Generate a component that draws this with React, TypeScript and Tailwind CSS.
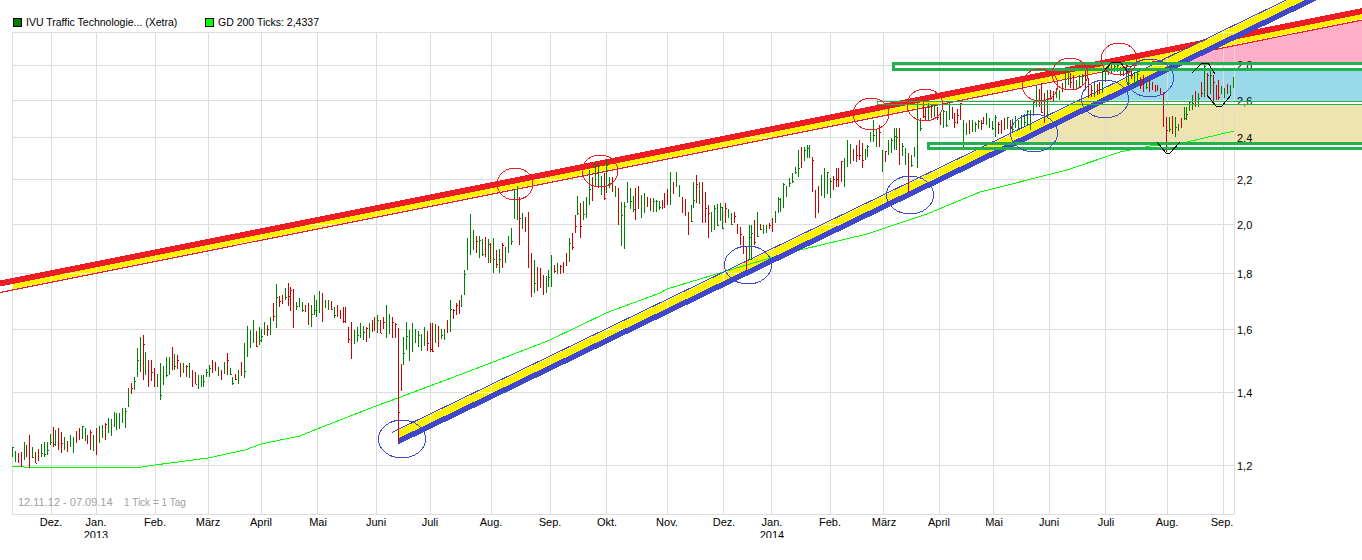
const FONT = "font-['Liberation_Sans',Arial,sans-serif]";

const gridX = [12, 51, 96, 155, 208, 261, 317, 376, 430, 491, 550, 606, 667, 723, 771, 830, 883, 939, 993, 1049, 1105, 1167, 1223, 1234];
const gridY = [32, 65, 100, 137, 179, 224, 273, 329, 392, 465, 514];

const yLabels: [string, number][] = [
  ["2,8", 69], ["2,6", 105], ["2,4", 142], ["2,2", 184], ["2,0", 229],
  ["1,8", 278], ["1,6", 334], ["1,4", 397], ["1,2", 470],
];

const xLabels: [string, number][] = [
  ["Dez.", 51], ["Jan.", 96], ["Feb.", 155], ["März", 208], ["April", 261], ["Mai", 318],
  ["Juni", 376], ["Juli", 430], ["Aug.", 491], ["Sep.", 550], ["Okt.", 607], ["Nov.", 667],
  ["Dez.", 724], ["Jan.", 772], ["Feb.", 830], ["März", 884], ["April", 939], ["Mai", 994],
  ["Juni", 1049], ["Juli", 1106], ["Aug.", 1167], ["Sep.", 1222],
];

// [x, high, low, red?] read off the chart
const keys: number[][] = [
  [12,447,457],[20,452,467,1],[29,435,468,1],[35,452,463,1],[45,442,457],[53,427,447,1],[62,432,453,1],[72,437,453],[78,428,440,1],[90,430,450,1],
  [96,428,455,1],[105,423,440,1],[116,413,430],[124,408,428],[129,388,407],[133,377,390],[137,348,377],[142,335,380,1],[148,360,387,1],[153,368,387,1],
  [160,363,400],[168,357,375],[172,347,370,1],[180,363,377,1],[190,363,378],[193,370,387,1],[202,375,387],[212,360,373,1],[213,350,370,1],[220,370,380,1],
  [228,353,375,1],[232,377,385],[238,370,383],[243,343,378],[246,326,357],[252,320,343],[259,327,345],[265,322,335],[270,317,335],[276,284,328],
  [284,288,300],[286,284,305,1],[293,289,328,1],[300,298,307],[309,303,325,1],[313,295,315],[321,293,322,1],[328,300,310],[336,305,317,1],[344,307,323,1],
  [350,322,359,1],[358,327,342],[366,327,342,1],[376,315,333],[381,320,333,1],[385,305,338],[391,317,338,1],[394,323,338,1],[399,328,442,1],[403,337,365],
  [407,322,350],[413,323,352],[420,334,351],[431,323,352,1],[437,326,347,1],[445,329,340],[451,300,332],[455,303,315,1],[461,295,307],[465,270,295],
  [468,238,270],[471,214,255],[475,236,253,1],[479,236,258],[486,237,257,1],[494,238,273],[502,243,268,1],[509,236,253],[515,189,218],[519,197,245,1],
  [525,217,232,1],[528,212,268,1],[531,253,297,1],[535,260,293],[539,268,288,1],[543,275,295,1],[548,270,287],[551,255,287],[558,263,273],[564,262,273,1],
  [569,238,262],[572,233,250,1],[577,196,215],[580,203,238,1],[585,197,218],[590,170,205],[596,162,187],[603,173,200,1],[606,160,193],[612,177,192,1],
  [619,188,225,1],[625,202,249],[628,182,203],[635,188,220,1],[643,193,213],[650,198,210,1],[655,200,212],[664,193,208,1],[671,172,205],[677,172,187],
  [683,197,213,1],[688,212,235,1],[695,175,203,1],[701,182,223,1],[708,205,238,1],[715,205,230],[725,203,223,1],[733,212,223,1],[741,227,245,1],[747,247,270,1],
  [750,225,260],[758,212,237],[765,225,233],[771,218,232,1],[778,197,213],[784,183,208],[790,178,187],[797,150,177],[802,147,168,1],[808,145,158],
  [813,157,192,1],[816,190,218,1],[823,168,198],[830,178,198],[837,168,187,1],[843,158,187],[848,140,167],[855,145,162,1],[861,143,168,1],[868,145,157],
  [872,120,142],[879,125,147,1],[883,150,172],[888,140,155],[895,128,150],[900,128,165,1],[904,148,165],[907,153,192,1],[913,147,157],[918,103,168],
  [922,102,118,1],[929,103,120],[937,107,120,1],[943,110,128],[948,102,120],[955,113,128,1],[962,103,123,1],[964,120,147],[971,120,132],[980,120,130,1],
  [985,113,125],[995,115,137],[1005,118,130,1],[1020,115,128],[1030,110,130],[1037,85,107],[1041,83,113,1],[1046,90,117],[1049,90,100,1],[1058,90,100],
  [1066,72,90],[1072,75,90,1],[1079,75,88],[1085,70,90,1],[1087,78,98,1],[1095,83,97],[1103,70,93],[1108,63,75],[1115,63,72],[1125,65,78,1],
  [1135,72,87],[1142,75,92,1],[1150,80,92,1],[1155,85,92,1],[1162,88,93,1],[1164,92,127,1],[1166,117,152,1],[1170,117,132],[1176,117,137],[1181,118,128,1],
  [1185,107,120],[1192,95,110],[1198,93,107],[1203,63,97],[1207,73,97,1],[1213,75,102,1],[1218,80,100,1],[1224,88,97],[1229,85,95],[1234,77,88],
];

// small repeatable noise, so the bars are the same on every load
let seed = 17;
const rnd = () => {
  seed = (seed * 16807) % 2147483647;
  return seed / 2147483647;
};

const buildBars = () => {
  const out: { d: string; red: boolean }[] = [];
  let k = 0;
  for (let x = 12; x <= 1234; x += 2.9) {
    while (k < keys.length - 2 && keys[k + 1][0] < x) k++;
    const a = keys[k];
    const b = keys[k + 1];
    const near = Math.abs(a[0] - x) < Math.abs(b[0] - x) ? a : b;
    let hi: number, lo: number, red: boolean;
    if (Math.abs(near[0] - x) <= 1.5) {
      hi = near[1];
      lo = near[2];
      red = !!near[3];
    } else {
      const t = (x - a[0]) / (b[0] - a[0]);
      const mid = ((a[1] + a[2]) * (1 - t) + (b[1] + b[2]) * t) / 2;
      const span = Math.max(6, Math.min(a[2] - a[1], b[2] - b[1]) * (0.7 + rnd() * 0.5));
      const shift = (rnd() - 0.5) * span * 0.6;
      hi = mid - span / 2 + shift;
      lo = mid + span / 2 + shift;
      red = rnd() > 0.55;
    }
    const px = Math.round(x) + 0.5;
    const top = Math.round(hi);
    const bottom = Math.round(lo);
    // one tick per bar, the reference mostly shows one side only
    const tickY = Math.round(hi + (lo - hi) * rnd()) + 0.5;
    const tick = rnd() > 0.5 ? `M${px - 1} ${tickY}H${px}` : `M${px} ${tickY}H${px + 1}`;
    out.push({ d: `M${px} ${top}V${bottom}${tick}`, red });
  }
  return out;
};

const bars = buildBars();
const redBars = bars.filter((b) => b.red).map((b) => b.d).join("");
const greenBars = bars.filter((b) => !b.red).map((b) => b.d).join("");

const avg =
  "12,466 24,467 63,467 135,468 155,465 208,458 245,450 261,444 300,436 317,429 376,406 398,398 475,369 550,340 606,313 660,293 667,289 723,272 770,258 800,250 867,234 927,214 980,192 1067,170 1120,152 1150,146 1187,142 1234,131";

const up = (x: number) => 283.5 - 0.2 * x;
const down = (x: number) => 441.5 - 0.4835 * (x - 398);

const yellowTop = `12,${up(12) + 3} 1362,${up(1362) + 3} 1362,${up(1362) + 8} 12,${up(12) + 8}`;
const yellowLow = `398,${down(398) - 3} 1313,${down(1313) - 3} 1313,${down(1313) - 11} 398,${down(398) - 11}`;

const redCircles = [[515, 184], [600, 171], [871, 114], [925, 105], [1040, 85], [1070, 74], [1119, 59]];
const blueCircles = [[402, 439], [748, 265], [910, 195], [1034, 133], [1105, 99], [1150, 78]];

function Legend() {
  return (
    <div className={`absolute left-[13px] top-[16px] flex items-center text-[10.5px] leading-[13px] text-black ${FONT}`}>
      <span className="h-[9px] w-[9px] border border-black bg-[#008000]" />
      <span className="ml-[4px] w-[179px]">IVU Traffic Technologie... (Xetra)</span>
      <span className="h-[9px] w-[9px] border border-black bg-[#00ff00]" />
      <span className="ml-[4px]">GD 200 Ticks: 2,4337</span>
    </div>
  );
}

function Chart() {
  return (
    <svg width="1362" height="560" viewBox="0 0 1362 560" className="block">
      <defs>
        <clipPath id="bands">
          <polygon points={yellowTop} />
          <polygon points={yellowLow} />
        </clipPath>
        <clipPath id="page">
          <rect x="0" y="0" width="1362" height="538" />
        </clipPath>
      </defs>

      <g shapeRendering="crispEdges">
        <polygon fill="#ffaec9" points="1213,50 1362,20 1362,63 1186,63" />
        <polygon fill="#99d9ea" points="1170,70 1362,70 1362,101 1107,101" />
        <polygon fill="#efe4b0" points="1099,105 1362,105 1362,143 1022,143" />

        <g stroke="#dcdcdc" fill="none">
          {gridX.map((x) => (
            <line key={x} x1={x + 0.5} x2={x + 0.5} y1="32" y2="514" />
          ))}
          {gridY.map((y) => (
            <line key={y} x1="12" x2="1234" y1={y + 0.5} y2={y + 0.5} />
          ))}
        </g>
      </g>

      <g className={FONT} fontSize="11" fill="#000">
        {yLabels.map(([t, y]) => (
          <text key={t} x="1237" y={y}>{t}</text>
        ))}
        <g clipPath="url(#page)" textAnchor="middle">
          {xLabels.map(([t, x]) => (
            <text key={x} x={x} y="526">{t}</text>
          ))}
          <text x="96" y="539">2013</text>
          <text x="772" y="539">2014</text>
        </g>
        <text x="18" y="506" fill="#a0a0a0">12.11.12 - 07.09.14</text>
        <text x="124" y="506" fill="#a0a0a0" fontSize="10">1 Tick = 1 Tag</text>
      </g>

      <g shapeRendering="crispEdges">
        {/* falling resistance line */}
        <polygon fill="#fff200" points={yellowTop} />
        <polygon fill="#ed1c24" points={`0,${up(0) - 3} 1362,${up(1362) - 3} 1362,${up(1362) + 3} 0,${up(0) + 3}`} />
        <line x1="0" y1={up(0) + 9} x2="1362" y2={up(1362) + 9} stroke="#ed1c24" />

        {/* rising support line */}
        <polygon fill="#fff200" points={yellowLow} />
        <g clipPath="url(#bands)" stroke="#fffaa8">
          {gridX.map((x) => (
            <line key={x} x1={x + 0.5} x2={x + 0.5} y1="32" y2="514" />
          ))}
          {gridY.map((y) => (
            <line key={y} x1="12" x2="1234" y1={y + 0.5} y2={y + 0.5} />
          ))}
        </g>
        <polyline points={avg} fill="none" stroke="#00ff00" />
        <polygon fill="#3f48cc" points={`398,${down(398) - 3} 1325,${down(1325) - 3} 1325,${down(1325) + 3} 398,${down(398) + 3}`} />
        <line x1="392" y1={down(392) - 12} x2="1300" y2={down(1300) - 12} stroke="#3f48cc" />

        <path d={greenBars} stroke="#008000" fill="none" />
        <path d={redBars} stroke="#cc0000" fill="none" />

        {/* marked zones */}
        <rect x="893.5" y="63.5" width="470" height="6" fill="none" stroke="#22b14c" strokeWidth="3" />
        <rect x="877.5" y="101.5" width="486" height="3" fill="none" stroke="#22b14c" />
        <rect x="928.5" y="143.5" width="435" height="5" fill="none" stroke="#22b14c" strokeWidth="3" />

        {redCircles.map(([cx, cy]) => (
          <ellipse key={cx} cx={cx} cy={cy} rx="18" ry="16" fill="none" stroke="#ed1c24" />
        ))}
        {blueCircles.map(([cx, cy]) => (
          <ellipse key={cx} cx={cx} cy={cy} rx="23.5" ry="19" fill="none" stroke="#3f48cc" />
        ))}

        <g fill="none" stroke="#000">
          <polyline points="1103,72 1112,62 1120,62 1128,72" />
          <polyline points="1192,73 1202,63 1208,63 1215,74" />
          <polyline points="1207,95 1216,106 1222,106 1231,95" />
          <polyline points="1157,142 1166,153 1170,153 1180,142" />
        </g>
      </g>
    </svg>
  );
}

export default function App() {
  return (
    <div className="relative h-[560px] w-[1362px] overflow-hidden bg-white">
      <Chart />
      <Legend />
    </div>
  );
}
